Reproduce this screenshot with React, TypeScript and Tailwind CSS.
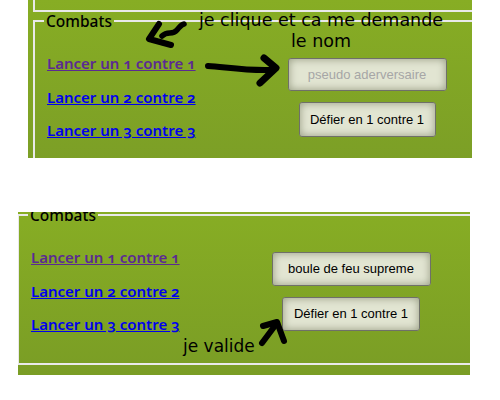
import React from "react";

const btn =
  "rounded-[3px] border border-[#6f7068] bg-[#e2e5d2] shadow-[inset_0_0_8px_#959a80] font-['Liberation_Sans',Arial,sans-serif] text-[13px] text-black flex items-center justify-center";

function CombatPanel({ right }: { right: React.ReactNode }) {
  return (
    <fieldset className="w-[460px] h-[159px] border-2 border-[#e9e9e9] p-0 m-0">
      <legend className="ml-[9px] px-[2px] leading-[18px] text-[15.5px] text-black font-medium font-['Noto_Sans',sans-serif]">
        Combats
      </legend>
      <div className="flex pl-[12px]">
        <div className="w-[240px] pt-[23px] flex flex-col gap-[13.5px] font-['Noto_Sans',sans-serif] text-[15px] leading-[20px] font-semibold oldstyle-nums">
          <a href="#" className="underline text-[#5b2a93] self-start">
            Lancer un 1 contre 1
          </a>
          <a href="#" className="underline text-[#0000ee] self-start">
            Lancer un 2 contre 2
          </a>
          <a href="#" className="underline text-[#0000ee] self-start">
            Lancer un 3 contre 3
          </a>
        </div>
        <div className="w-[160px] pt-[28px] flex flex-col items-center gap-[11px]">{right}</div>
      </div>
    </fieldset>
  );
}

export default function App() {
  return (
    <div className="relative w-[500px] h-[400px] bg-white overflow-hidden">
      {/* top screenshot */}
      <div className="ml-[28px] w-[444px] h-[158px] overflow-hidden bg-gradient-to-b from-[#87ad24] to-[#7c9f26]">
        <div className="ml-[5px] h-[12px] border-l-2 border-b-2 border-[#e9e9e9]" />
        <div className="ml-[5px]">
          <CombatPanel
            right={
              <>
                <input
                  placeholder="pseudo aderversaire"
                  className={btn + " w-[159px] h-[33px] text-center text-[13.5px] placeholder:text-[#a6a6a6] outline-none"}
                />
                <button className={btn + " w-[137px] h-[35px]"}>Défier en 1 contre 1</button>
              </>
            }
          />
        </div>
      </div>

      <div className="h-[54px]" />

      {/* bottom screenshot */}
      <div className="ml-[18px] w-[452px] h-[163px] overflow-hidden bg-gradient-to-b from-[#87ad24] to-[#7a9d25]">
        <div className="ml-[-1px] mt-[-6px]">
          <CombatPanel
            right={
              <>
                <button className={btn + " w-[159px] h-[34px]"}>boule de feu supreme</button>
                <button className={btn + " w-[138px] h-[34px]"}>Défier en 1 contre 1</button>
              </>
            }
          />
        </div>
      </div>

      {/* annotations */}
      <div className="absolute left-[191px] top-[10px] w-[260px] text-center text-black font-['DejaVu_Sans',sans-serif] text-[17.5px] leading-[21px]">
        je clique et ca me demande
        <br />
        le nom
      </div>
      <div className="absolute left-[183px] top-[336px] text-black font-['DejaVu_Sans',sans-serif] text-[17px] leading-[20px]">
        je valide
      </div>

      <svg className="absolute left-0 top-0 pointer-events-none" width="500" height="400" viewBox="0 0 500 400">
        <g fill="none" stroke="#000" strokeLinecap="round" strokeLinejoin="round">
          <path d="M159,24 L149,39 L171,45" strokeWidth="6" />
          <path d="M162,36 C168,30 172,36 177,30 S182,25 184,24" strokeWidth="5.5" />
          <path d="M208,66 C225,67 245,71 272,70" strokeWidth="6" />
          <path d="M264,58 L276,68 L260,83" strokeWidth="7" />
          <path d="M263,326 L277,322 L284,341" strokeWidth="6" />
          <path d="M277,323 L262,343" strokeWidth="6" />
        </g>
      </svg>
    </div>
  );
}
